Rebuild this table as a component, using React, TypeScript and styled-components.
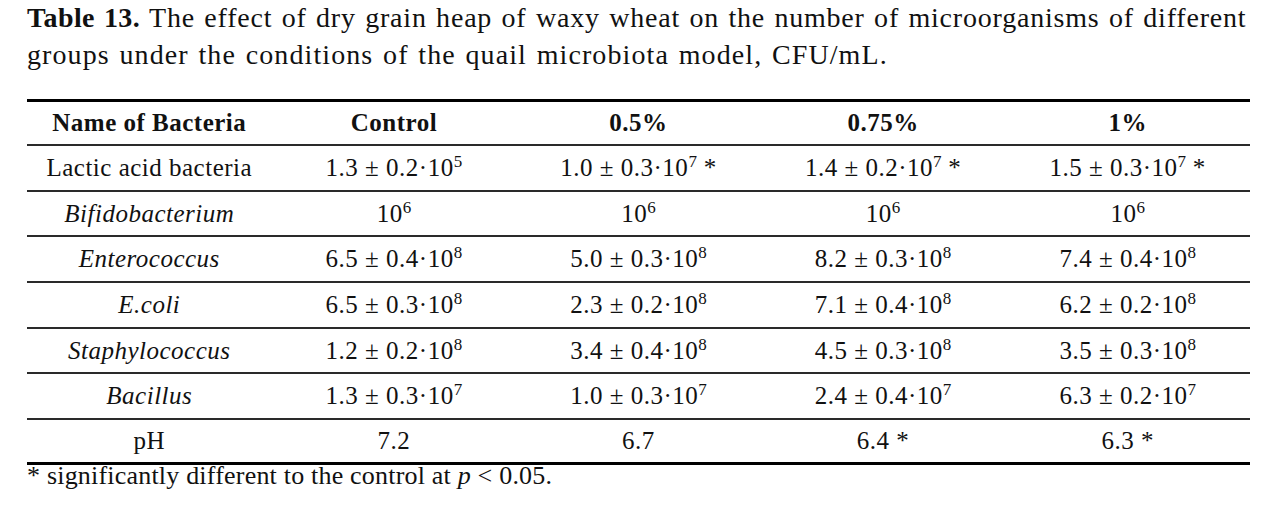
import styled, { createGlobalStyle } from "styled-components";

const GlobalStyle = createGlobalStyle`
  body {
    margin: 0;
    background: #ffffff;
    font-family: "Liberation Serif", "DejaVu Serif", serif;
    color: #111;
  }
`;

const Page = styled.div`
  width: 1275px;
  height: 511px;
  padding: 0 25px 0 27px;
  box-sizing: border-box;
`;

const Caption = styled.p`
  margin: -1px 0 0 0;
  font-size: 28px;
  line-height: 37px;
  letter-spacing: 0.8px;
  word-spacing: 1.6px;
  white-space: nowrap;
`;

const Label = styled.b`
  font-weight: bold;
  letter-spacing: 0.4px;
`;

const CaptionLine = styled.span`
  letter-spacing: 1.1px;
`;

const Table = styled.table`
  width: 1223px;
  margin-top: 26px;
  border-collapse: collapse;
  table-layout: fixed;
  border-top: 3px solid #000;
  border-bottom: 3px solid #000;
`;

const Head = styled.th`
  height: 42px;
  font-size: 25px;
  font-weight: bold;
  letter-spacing: 0.5px;
  text-align: center;
  border-bottom: 2px solid #2a2a2a;
  padding: 0;
`;

const Row = styled.tr<{ $last?: boolean }>`
  border-bottom: ${(p) => (p.$last ? "none" : "2px solid #2a2a2a")};
`;

const Cell = styled.td<{ $italic?: boolean; $short?: boolean }>`
  height: ${(p) => (p.$short ? "42px" : "43.7px")};
  font-size: 25px;
  letter-spacing: 0.5px;
  text-align: center;
  padding: 0;
  font-style: ${(p) => (p.$italic ? "italic" : "normal")};

  sup {
    font-size: 17px;
    line-height: 0;
    vertical-align: 9px;
    letter-spacing: 0;
  }
`;

const Note = styled.p`
  margin: 0;
  font-size: 26px;
  line-height: 22px;
  letter-spacing: 0.2px;
`;

type Value = { m: string; e?: string; star?: boolean };

type RowType = {
  name: string;
  italic?: boolean;
  values: Value[];
};

const rows: RowType[] = [
  {
    name: "Lactic acid bacteria",
    values: [
      { m: "1.3 ± 0.2·10", e: "5" },
      { m: "1.0 ± 0.3·10", e: "7", star: true },
      { m: "1.4 ± 0.2·10", e: "7", star: true },
      { m: "1.5 ± 0.3·10", e: "7", star: true },
    ],
  },
  {
    name: "Bifidobacterium",
    italic: true,
    values: [
      { m: "10", e: "6" },
      { m: "10", e: "6" },
      { m: "10", e: "6" },
      { m: "10", e: "6" },
    ],
  },
  {
    name: "Enterococcus",
    italic: true,
    values: [
      { m: "6.5 ± 0.4·10", e: "8" },
      { m: "5.0 ± 0.3·10", e: "8" },
      { m: "8.2 ± 0.3·10", e: "8" },
      { m: "7.4 ± 0.4·10", e: "8" },
    ],
  },
  {
    name: "E.coli",
    italic: true,
    values: [
      { m: "6.5 ± 0.3·10", e: "8" },
      { m: "2.3 ± 0.2·10", e: "8" },
      { m: "7.1 ± 0.4·10", e: "8" },
      { m: "6.2 ± 0.2·10", e: "8" },
    ],
  },
  {
    name: "Staphylococcus",
    italic: true,
    values: [
      { m: "1.2 ± 0.2·10", e: "8" },
      { m: "3.4 ± 0.4·10", e: "8" },
      { m: "4.5 ± 0.3·10", e: "8" },
      { m: "3.5 ± 0.3·10", e: "8" },
    ],
  },
  {
    name: "Bacillus",
    italic: true,
    values: [
      { m: "1.3 ± 0.3·10", e: "7" },
      { m: "1.0 ± 0.3·10", e: "7" },
      { m: "2.4 ± 0.4·10", e: "7" },
      { m: "6.3 ± 0.2·10", e: "7" },
    ],
  },
  {
    name: "pH",
    values: [
      { m: "7.2" },
      { m: "6.7" },
      { m: "6.4", star: true },
      { m: "6.3", star: true },
    ],
  },
];

const heads = ["Name of Bacteria", "Control", "0.5%", "0.75%", "1%"];

const App = () => {
  return (
    <Page>
      <GlobalStyle />
      <Caption>
        <Label>Table 13.</Label> The effect of dry grain heap of waxy wheat on
        the number of microorganisms of different
        <br />
        <CaptionLine>
          groups under the conditions of the quail microbiota model, CFU/mL.
        </CaptionLine>
      </Caption>
      <Table>
        <thead>
          <tr>
            {heads.map((h) => (
              <Head key={h}>{h}</Head>
            ))}
          </tr>
        </thead>
        <tbody>
          {rows.map((r, i) => {
            const last = i === rows.length - 1;
            return (
              <Row key={r.name} $last={last}>
                <Cell $italic={r.italic} $short={last}>
                  {r.name}
                </Cell>
                {r.values.map((v, j) => (
                  <Cell key={j} $short={last}>
                    {v.m}
                    {v.e && <sup>{v.e}</sup>}
                    {v.star && " *"}
                  </Cell>
                ))}
              </Row>
            );
          })}
        </tbody>
      </Table>
      <Note>
        * significantly different to the control at <i>p</i> &lt; 0.05.
      </Note>
    </Page>
  );
};

export default App;
